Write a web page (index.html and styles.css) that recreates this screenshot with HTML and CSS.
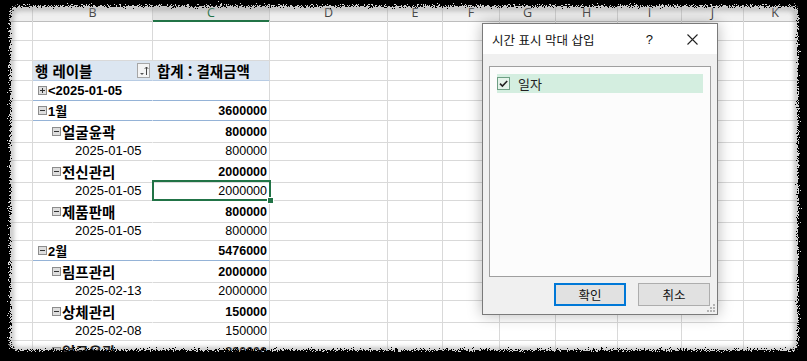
FILE: index.html
```html
<!DOCTYPE html>
<html lang="ko">
<head>
    <meta charset="UTF-8">
    <meta name="viewport" content="width=device-width, initial-scale=1.0">
    <title>시간 표시 막대 삽입</title>
    <link rel="stylesheet" href="styles.css">
</head>
<body>
    <div class="screen">
        <div class="sheet">
            <div class="row colhead">
                <div></div><div>B</div><div class="on">C</div><div>D</div><div>E</div><div>F</div><div>G</div><div>H</div><div>I</div><div>J</div><div>K</div>
            </div>
            <div class="row">
                <div></div><div></div><div></div><div></div><div></div><div></div><div></div><div></div><div></div><div></div><div></div>
            </div>
            <div class="row">
                <div></div><div></div><div></div><div></div><div></div><div></div><div></div><div></div><div></div><div></div><div></div>
            </div>
            <!-- pivot header -->
            <div class="row pivot top">
                <div></div>
                <div class="b label">행 레이블
                    <span class="fbtn">
                        <svg width="11" height="14" viewBox="0 0 11 14"><path d="M2 9h4l-2 2z" fill="#555"/><path d="M8.5 3v8M6.8 4.8l1.7-1.8 1.7 1.8" stroke="#444" fill="none"/></svg>
                    </span>
                </div>
                <div class="c label">합계 : 결재금액</div>
                <div></div><div></div><div></div><div></div><div></div><div></div><div></div><div></div>
            </div>
            <div class="row pivot lv1">
                <div></div>
                <div class="b"><svg class="tog" width="9" height="9"><rect x=".5" y=".5" width="8" height="8" fill="#dedede" stroke="#8c8c8c"/><path d="M2 4.5h5M4.5 2v5" stroke="#333"/></svg>&lt;2025-01-05</div>
                <div class="c"></div>
                <div></div><div></div><div></div><div></div><div></div><div></div><div></div><div></div>
            </div>
            <div class="row pivot lv1">
                <div></div>
                <div class="b"><svg class="tog" width="9" height="9"><rect x=".5" y=".5" width="8" height="8" fill="#dedede" stroke="#8c8c8c"/><path d="M2 4.5h5" stroke="#333"/></svg>1월</div>
                <div class="c num">3600000</div>
                <div></div><div></div><div></div><div></div><div></div><div></div><div></div><div></div>
            </div>
            <div class="row pivot lv2">
                <div></div>
                <div class="b"><svg class="tog" width="9" height="9"><rect x=".5" y=".5" width="8" height="8" fill="#dedede" stroke="#8c8c8c"/><path d="M2 4.5h5" stroke="#333"/></svg>얼굴윤곽</div>
                <div class="c num">800000</div>
                <div></div><div></div><div></div><div></div><div></div><div></div><div></div><div></div>
            </div>
            <div class="row pivot lv3">
                <div></div>
                <div class="b">2025-01-05</div>
                <div class="c num">800000</div>
                <div></div><div></div><div></div><div></div><div></div><div></div><div></div><div></div>
            </div>
            <div class="row pivot lv2">
                <div></div>
                <div class="b"><svg class="tog" width="9" height="9"><rect x=".5" y=".5" width="8" height="8" fill="#dedede" stroke="#8c8c8c"/><path d="M2 4.5h5" stroke="#333"/></svg>전신관리</div>
                <div class="c num">2000000</div>
                <div></div><div></div><div></div><div></div><div></div><div></div><div></div><div></div>
            </div>
            <div class="row pivot lv3">
                <div></div>
                <div class="b">2025-01-05</div>
                <div class="c num sel">2000000</div>
                <div></div><div></div><div></div><div></div><div></div><div></div><div></div><div></div>
            </div>
            <div class="row pivot lv2">
                <div></div>
                <div class="b"><svg class="tog" width="9" height="9"><rect x=".5" y=".5" width="8" height="8" fill="#dedede" stroke="#8c8c8c"/><path d="M2 4.5h5" stroke="#333"/></svg>제품판매</div>
                <div class="c num">800000</div>
                <div></div><div></div><div></div><div></div><div></div><div></div><div></div><div></div>
            </div>
            <div class="row pivot lv3">
                <div></div>
                <div class="b">2025-01-05</div>
                <div class="c num">800000</div>
                <div></div><div></div><div></div><div></div><div></div><div></div><div></div><div></div>
            </div>
            <div class="row pivot lv1">
                <div></div>
                <div class="b"><svg class="tog" width="9" height="9"><rect x=".5" y=".5" width="8" height="8" fill="#dedede" stroke="#8c8c8c"/><path d="M2 4.5h5" stroke="#333"/></svg>2월</div>
                <div class="c num">5476000</div>
                <div></div><div></div><div></div><div></div><div></div><div></div><div></div><div></div>
            </div>
            <div class="row pivot lv2">
                <div></div>
                <div class="b"><svg class="tog" width="9" height="9"><rect x=".5" y=".5" width="8" height="8" fill="#dedede" stroke="#8c8c8c"/><path d="M2 4.5h5" stroke="#333"/></svg>림프관리</div>
                <div class="c num">2000000</div>
                <div></div><div></div><div></div><div></div><div></div><div></div><div></div><div></div>
            </div>
            <div class="row pivot lv3">
                <div></div>
                <div class="b">2025-02-13</div>
                <div class="c num">2000000</div>
                <div></div><div></div><div></div><div></div><div></div><div></div><div></div><div></div>
            </div>
            <div class="row pivot lv2">
                <div></div>
                <div class="b"><svg class="tog" width="9" height="9"><rect x=".5" y=".5" width="8" height="8" fill="#dedede" stroke="#8c8c8c"/><path d="M2 4.5h5" stroke="#333"/></svg>상체관리</div>
                <div class="c num">150000</div>
                <div></div><div></div><div></div><div></div><div></div><div></div><div></div><div></div>
            </div>
            <div class="row pivot lv3">
                <div></div>
                <div class="b">2025-02-08</div>
                <div class="c num">150000</div>
                <div></div><div></div><div></div><div></div><div></div><div></div><div></div><div></div>
            </div>
            <div class="row pivot lv2">
                <div></div>
                <div class="b"><svg class="tog" width="9" height="9"><rect x=".5" y=".5" width="8" height="8" fill="#dedede" stroke="#8c8c8c"/><path d="M2 4.5h5" stroke="#333"/></svg>얼굴윤곽</div>
                <div class="c num">830000</div>
                <div></div><div></div><div></div><div></div><div></div><div></div><div></div><div></div>
            </div>
        </div>

        <!-- Insert Timeline dialog -->
        <div class="dlg">
            <div class="dlg-title">
                <span class="dlg-name">시간 표시 막대 삽입</span>
                <span class="dlg-help">?</span>
                <svg class="dlg-close" width="11" height="11" viewBox="0 0 11 11"><path d="M.5.5l10 10M10.5.5l-10 10" stroke="#222" stroke-width="1.1"/></svg>
            </div>
            <div class="dlg-body">
                <div class="list">
                    <div class="item">
                        <span class="chk"><svg width="11" height="11" viewBox="0 0 11 11"><path d="M2 5.6l2.4 2.4 4.8-5" stroke="#222" stroke-width="1.6" fill="none"/></svg></span>
                        일자
                    </div>
                </div>
                <div class="btns">
                    <button class="btn ok">확인</button>
                    <button class="btn">취소</button>
                </div>
                <svg class="grip" width="10" height="10" viewBox="0 0 10 10"><path d="M7 1h2v2H7zM4 4h2v2H4zM7 4h2v2H7zM1 7h2v2H1zM4 7h2v2H4zM7 7h2v2H7z" fill="#b4b4b4"/></svg>
            </div>
        </div>

        <!-- torn paper edge -->
        <svg class="frame" width="807" height="361" viewBox="0 0 807 361">
            <defs>
                <filter id="rough" x="-5%" y="-5%" width="110%" height="110%">
                    <feTurbulence type="fractalNoise" baseFrequency="1.3" numOctaves="3" seed="4" result="n"/>
                    <feDisplacementMap in="SourceGraphic" in2="n" scale="10" xChannelSelector="R" yChannelSelector="G"/>
                </filter>
                <filter id="halo">
                    <feGaussianBlur stdDeviation="2.5"/>
                </filter>
            </defs>
            <rect x="11" y="8" width="786" height="342" rx="8" fill="none" stroke="#8a8a8a" stroke-width="5" filter="url(#halo)" opacity=".6"/>
            <path fill="#000" fill-rule="evenodd" filter="url(#rough)" d="M-20 -20H827V381H-20Z M18 6H790Q798 6 798 14V342Q798 350 790 350H18Q10 350 10 342V14Q10 6 18 6Z"/>
        </svg>
    </div>
</body>
</html>
```

FILE: styles.css
```css
body {
    margin: 0;
    background: #000;
    font-family: "Liberation Sans", "Noto Sans CJK KR", sans-serif;
}
.screen {
    position: relative;
    width: 807px;
    height: 361px;
    overflow: hidden;
    background: #fff;
}
.row {
    display: grid;
    grid-template-columns: 33px 120px 117px 118px 55px 57px 56px 62px 64px 62px 63px;
    height: 20px;
}
.row > div {
    box-sizing: border-box;
    border-right: 1px solid #d9d9d9;
    border-bottom: 1px solid #d9d9d9;
    display: flex;
    align-items: center;
    white-space: nowrap;
    color: #000;
}
.colhead {
    height: 21px;
}
.colhead > div {
    justify-content: center;
    align-items: flex-start;
    padding-top: 5px;
    background: #efefef;
    border-right-color: #d0d0d0;
    border-bottom-color: #bdbdbd;
    font-family: "Open Sans", sans-serif;
    font-size: 12.5px;
    line-height: 15px;
    color: #444;
}
.colhead > .on {
    background: #e2e2e2;
    color: #217346;
    border-bottom: 2px solid #217346;
}

/* pivot table */
.pivot > .b {
    border-right-color: transparent;
    font-weight: bold;
    font-size: 13px;
}
.pivot > .c {
    justify-content: flex-end;
    padding-right: 2px;
}
.top > .b,
.top > .c {
    background: #dce6f1;
    border-bottom-color: #b8cce4;
    font-family: "Noto Sans CJK KR", sans-serif;
    font-weight: bold;
    font-size: 14.5px;
    line-height: 18px;
}
.top > .b {
    padding-left: 2px;
    position: relative;
}
.top > .c {
    justify-content: flex-start;
    padding-left: 4px;
}
.fbtn {
    position: absolute;
    right: 2px;
    top: 2px;
    width: 13px;
    height: 15px;
    box-sizing: border-box;
    border: 1px solid #a6a6a6;
    background: #f4f4f4;
    display: flex;
    align-items: center;
    justify-content: center;
}
.lv1 > .b,
.lv1 > .c {
    border-bottom-color: #95b3d7;
}
.lv1 > .b {
    padding-left: 5px;
}
.lv2 > .b {
    padding-left: 19px;
    font-size: 14.5px;
}
.lv3 > .b {
    padding-left: 42px;
    font-weight: normal;
    font-size: 13px;
}
.tog {
    margin-right: 1px;
    flex: none;
}
.num {
    font-size: 12.5px;
}
.lv1 > .num,
.lv2 > .num {
    font-weight: bold;
}
.sel {
    position: relative;
}
.sel::before {
    content: "";
    position: absolute;
    left: -1px;
    top: -1px;
    right: -2px;
    bottom: -1px;
    border: 2px solid #217346;
}
.sel::after {
    content: "";
    position: absolute;
    right: -5px;
    bottom: -4px;
    width: 5px;
    height: 5px;
    background: #217346;
    border: 1px solid #fff;
}

/* dialog */
.dlg {
    position: absolute;
    left: 482px;
    top: 23px;
    width: 236px;
    height: 292px;
    box-sizing: border-box;
    border: 1px solid #7a7a7a;
    background: #f0f0f0;
    box-shadow: 0 0 14px rgba(0, 0, 0, 0.28);
    font-family: "Noto Sans CJK KR", sans-serif;
    display: flex;
    flex-direction: column;
}
.dlg-title {
    height: 30px;
    background: #fff;
    display: flex;
    align-items: center;
    padding-left: 9px;
    font-size: 12.5px;
    color: #111;
}
.dlg-name {
    flex: 1;
}
.dlg-help {
    font-family: "Liberation Sans", sans-serif;
    font-size: 13px;
    margin-right: 34px;
}
.dlg-close {
    margin-right: 19px;
}
.dlg-body {
    position: relative;
    flex: 1;
    padding: 12px 6px 0 6px;
}
.list {
    height: 211px;
    box-sizing: border-box;
    border: 1px solid #9f9f9f;
    background: #fcfcfc;
    padding: 7px 7px 0 7px;
}
.item {
    height: 19px;
    background: #d4eee0;
    display: flex;
    align-items: center;
    font-size: 13px;
    color: #222;
}
.chk {
    width: 13px;
    height: 13px;
    box-sizing: border-box;
    border: 1px solid #6e9f84;
    background: #e4f3ea;
    display: flex;
    align-items: center;
    justify-content: center;
    margin-right: 8px;
}
.btns {
    display: flex;
    justify-content: flex-end;
    gap: 12px;
    margin-top: 6px;
    padding-right: 1px;
}
.btn {
    width: 72px;
    height: 23px;
    box-sizing: border-box;
    border: 1px solid #adadad;
    background: #e1e1e1;
    font-family: "Noto Sans CJK KR", sans-serif;
    font-size: 12.5px;
    color: #111;
    padding: 0;
}
.btn.ok {
    border: 2px solid #0078d7;
}
.grip {
    position: absolute;
    right: 1px;
    bottom: 1px;
}
.frame {
    position: absolute;
    left: 0;
    top: 0;
    pointer-events: none;
}
```
